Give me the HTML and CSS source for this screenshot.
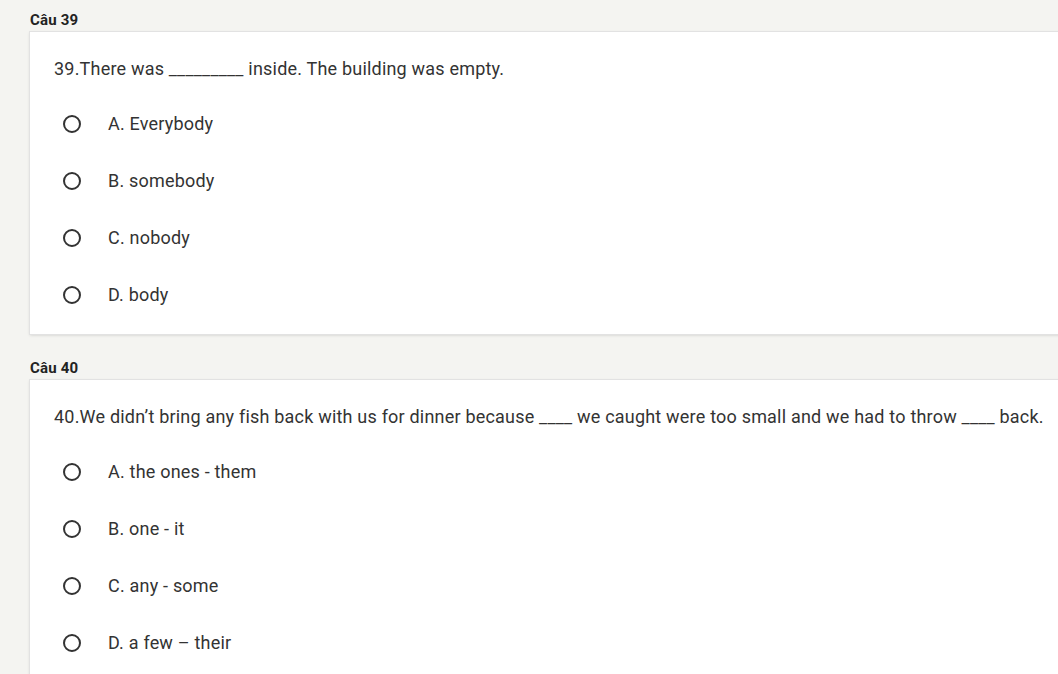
FILE: index.html
```html
<!DOCTYPE html>
<html>
<head>
<meta charset="utf-8">
<link rel="stylesheet" href="styles.css">
</head>
<body>
<div class="page">
  <section class="q">
    <div class="q-label">Câu 39</div>
    <div class="card">
      <div class="q-text">39.There was _________ inside. The building was empty.</div>
      <div class="opts">
        <label class="opt"><span class="radio"></span><span class="opt-text">A. Everybody</span></label>
        <label class="opt"><span class="radio"></span><span class="opt-text">B. somebody</span></label>
        <label class="opt"><span class="radio"></span><span class="opt-text">C. nobody</span></label>
        <label class="opt"><span class="radio"></span><span class="opt-text">D. body</span></label>
      </div>
    </div>
  </section>
  <section class="q">
    <div class="q-label">Câu 40</div>
    <div class="card">
      <div class="q-text">40.We didn’t bring any fish back with us for dinner because ____ we caught were too small and we had to throw ____ back.</div>
      <div class="opts">
        <label class="opt"><span class="radio"></span><span class="opt-text">A. the ones - them</span></label>
        <label class="opt"><span class="radio"></span><span class="opt-text">B. one - it</span></label>
        <label class="opt"><span class="radio"></span><span class="opt-text">C. any - some</span></label>
        <label class="opt"><span class="radio"></span><span class="opt-text">D. a few – their</span></label>
      </div>
    </div>
  </section>
</div>
</body>
</html>
```
FILE: styles.css
```css
html, body {
  margin: 0;
  padding: 0;
  background: #f4f4f1;
  overflow: hidden;
  width: 1058px;
  height: 674px;
}
.page {
  padding: 10px 0 0 30px;
  font-family: Roboto, "Liberation Sans", sans-serif;
  color: #333;
}
.q {
  margin-bottom: 24px;
}
.q-label {
  font-size: 15px;
  font-weight: 700;
  letter-spacing: 0.2px;
  line-height: 20px;
  color: #222;
  margin-bottom: 2px;
}
.card {
  width: 1100px;
  background: #fff;
  box-shadow: 0 0 0 1px #e2e2e2, 0 1px 3px rgba(0, 0, 0, 0.18);
  padding: 25px 0 11px 24px;
  box-sizing: border-box;
}
.q-text {
  font-size: 18px;
  letter-spacing: 0.2px;
  line-height: 24px;
  color: #333;
  white-space: nowrap;
  margin-bottom: 14px;
}
.opts {
  display: flex;
  flex-direction: column;
}
.opt {
  display: flex;
  align-items: center;
  height: 57px;
  padding-left: 9px;
}
.radio {
  width: 18px;
  height: 18px;
  border: 2px solid #333;
  border-radius: 50%;
  box-sizing: border-box;
  flex: none;
}
.opt-text {
  margin-left: 27px;
  font-size: 18px;
  letter-spacing: 0.2px;
  color: #333;
}
```
